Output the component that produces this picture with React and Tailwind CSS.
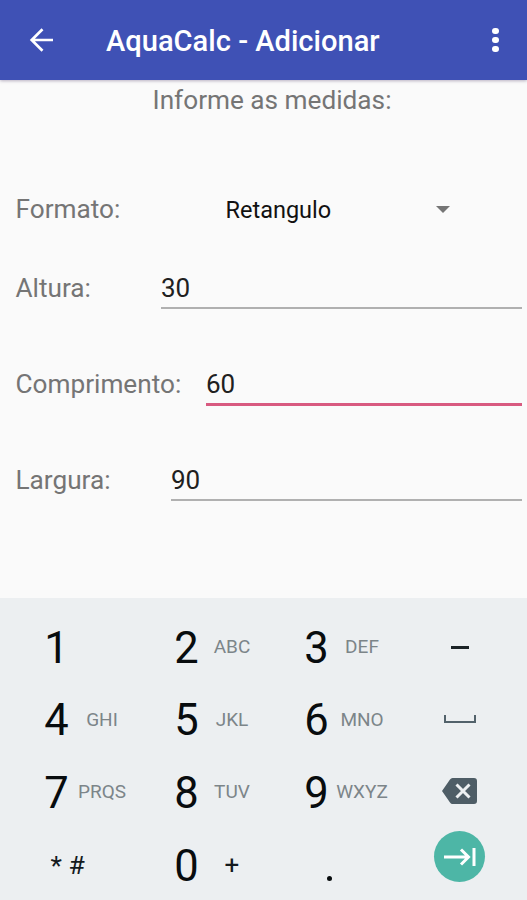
import { useState } from "react";
import clsx from "clsx";

const KEYS = [
  { digit: "1", letters: "" },
  { digit: "2", letters: "ABC" },
  { digit: "3", letters: "DEF" },
  { action: "minus" },
  { digit: "4", letters: "GHI" },
  { digit: "5", letters: "JKL" },
  { digit: "6", letters: "MNO" },
  { action: "space" },
  { digit: "7", letters: "PRQS" },
  { digit: "8", letters: "TUV" },
  { digit: "9", letters: "WXYZ" },
  { action: "backspace" },
];

function AppBar() {
  return (
    <header className="relative flex h-20 items-center bg-[#3f51b5] text-white shadow-[0_1px_3px_rgba(60,40,90,0.35)]">
      <button className="ml-[29px] mr-[52px] w-[25px]">
        <svg viewBox="0 0 25 24" className="block h-6 w-[25px]" fill="none" stroke="currentColor" strokeWidth="2.7">
          <path d="M24 12H3M13.5 1.2L2.7 12l10.8 10.8" />
        </svg>
      </button>
      <h1 className="pt-[3px] text-[29.1px] font-medium leading-none">AquaCalc - Adicionar</h1>
      <button className="ml-auto mr-7 flex w-[7px] flex-col gap-[2.5px]">
        <span className="size-[6.5px] rounded-full bg-white" />
        <span className="size-[6.5px] rounded-full bg-white" />
        <span className="size-[6.5px] rounded-full bg-white" />
      </button>
    </header>
  );
}

function Field({ label, value, labelClass, focused, onFocus }) {
  return (
    <label className="flex h-12 items-start pl-[15.5px] pr-[5px]">
      <span className={clsx("text-[26.2px] leading-[36px] text-[#757575]", labelClass)}>{label}</span>
      <span
        onClick={onFocus}
        className={clsx(
          "flex-1 text-[26px] leading-[36px] text-[#202020]",
          focused ? "h-[40px] border-b-[3px] border-[#d85a80]" : "h-[39px] border-b-2 border-[#b0b0b0]"
        )}
      >
        {value}
      </span>
    </label>
  );
}

function ActionKey({ action }) {
  return (
    <button className="flex items-center justify-center">
      {action === "minus" && <span className="h-[3px] w-[18px] bg-[#1c2327]" />}
      {action === "space" && <span className="mb-[3px] h-2 w-8 border-2 border-t-0 border-[#52626b]" />}
      {action === "backspace" && (
        <svg viewBox="0 0 35 26" className="mb-[4px] h-[26px] w-[35px]">
          <path d="M10.5 0H32a3 3 0 0 1 3 3v20a3 3 0 0 1-3 3H10.5Q9 26 8 24.500L0 13 8 1.500Q9 0 10.500 0z" fill="#4e5d66" />
          <path d="M14.500 6.500l13 13M27.500 6.500l-13 13" stroke="#eceff1" strokeWidth="3" />
        </svg>
      )}
    </button>
  );
}

function DigitKey({ digit, letters }) {
  return (
    <button className="flex items-center justify-start">
      <span className="w-[30px] shrink-0 pt-[2px] text-center text-[43.5px] leading-none text-[#080c0e]">{digit}</span>
      <span className="w-[61px] shrink-0 pb-[2px] text-center text-[19px] leading-none text-[#7c8589]">{letters}</span>
    </button>
  );
}

function Keypad() {
  return (
    <section className="grid h-[302px] auto-rows-[72.7px] grid-cols-[90px_90px_90px_56px] gap-x-10 bg-[#eceff1] pl-[41.5px] pt-[13px]">
      {KEYS.map((key) =>
        key.action ? <ActionKey key={key.action} action={key.action} /> : <DigitKey key={key.digit} {...key} />
      )}
      <button className="flex items-center pl-[9px] text-[26.5px] leading-none text-[#141a1d]">* #</button>
      <button className="flex items-center justify-start">
        <span className="w-[30px] shrink-0 pt-[2px] text-center text-[43.5px] leading-none text-[#080c0e]">0</span>
        <span className="w-[61px] shrink-0 text-center text-[26px] leading-none text-[#141a1d]">+</span>
      </button>
      <button className="flex items-end justify-start pb-[21px] pl-[25px]">
        <span className="size-[5px] rounded-full bg-[#080c0e]" />
      </button>
      <button className="flex items-start justify-center pt-[2px]">
        <span className="flex size-[51px] items-center justify-center rounded-full bg-[#4db6a6]">
          <svg viewBox="0 0 32 18" className="h-[18px] w-8" fill="none" stroke="#fff" strokeWidth="3">
            <path d="M0 9h24M17 1.500L24.500 9 17 16.500M30 0v18" />
          </svg>
        </span>
      </button>
    </section>
  );
}

export default function App() {
  const [focused, setFocused] = useState("comprimento");

  return (
    <div className="flex h-[900px] w-[527px] flex-col overflow-hidden bg-[#fafafa] font-[Roboto,sans-serif]">
      <AppBar />
      <main className="flex flex-1 flex-col">
        <p className="pl-[17px] pt-1 text-center text-[26.2px] leading-8 text-[#757575]">Informe as medidas:</p>

        <div className="mt-[75px] flex h-9 items-center pl-[15.5px]">
          <span className="w-[210px] text-[26.2px] leading-9 text-[#757575]">Formato:</span>
          <button className="flex w-[224px] items-center justify-between text-[23.5px] leading-9 text-[#111]">
            <span className="pt-[2px]">Retangulo</span>
            <span className="border-x-[7px] border-t-[7px] border-x-transparent border-t-[#757575]" />
          </button>
        </div>

        <div className="mt-[43px] flex flex-col gap-12">
          <Field label="Altura:" value="30" labelClass="w-[145.5px]" focused={focused === "altura"} onFocus={() => setFocused("altura")} />
          <Field label="Comprimento:" value="60" labelClass="w-[190.5px]" focused={focused === "comprimento"} onFocus={() => setFocused("comprimento")} />
          <Field label="Largura:" value="90" labelClass="w-[155.5px]" focused={focused === "largura"} onFocus={() => setFocused("largura")} />
        </div>
      </main>
      <Keypad />
    </div>
  );
}
